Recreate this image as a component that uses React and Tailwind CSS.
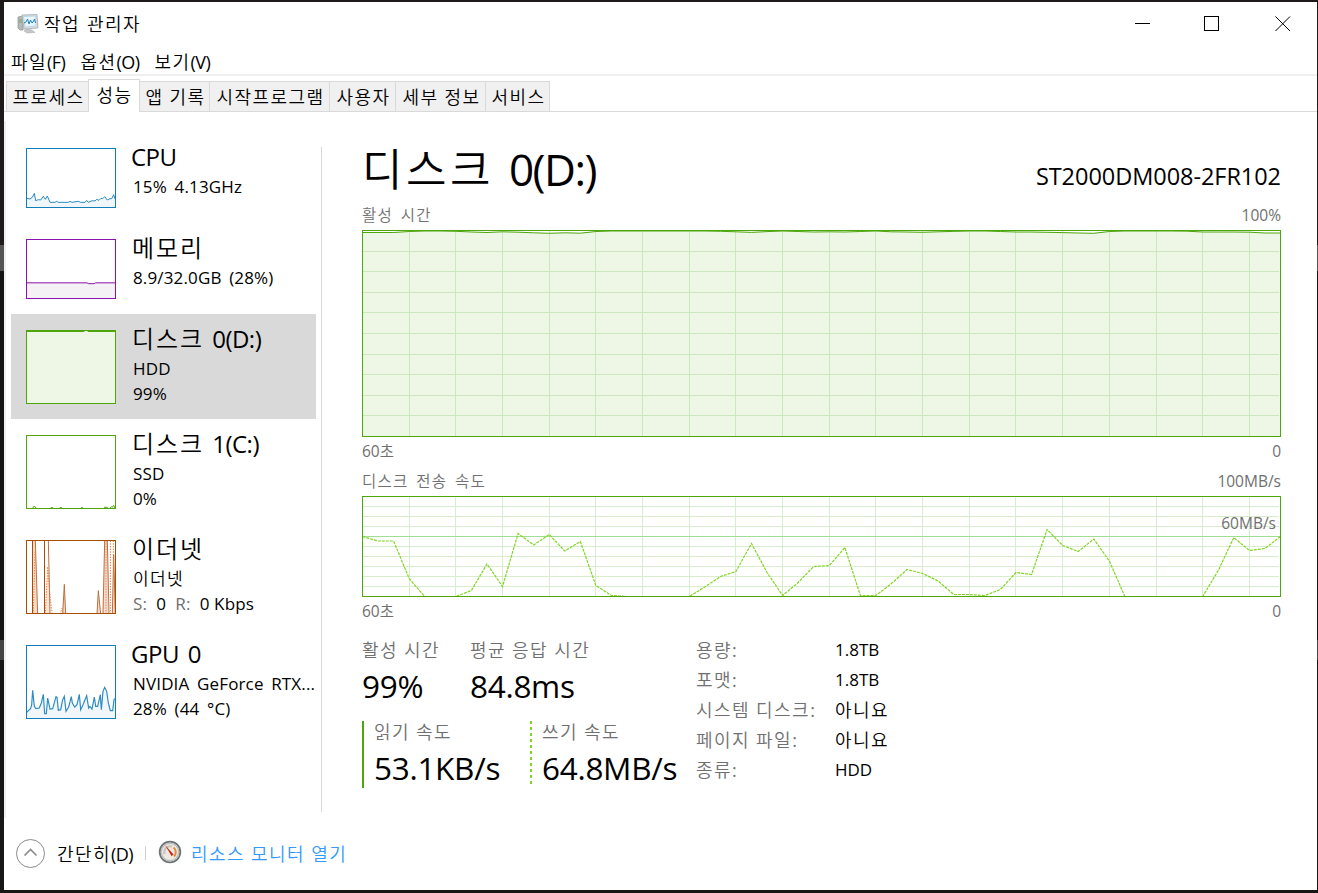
import React from 'react';

const TABS = [
    { label: '프로세스', width: 'w-[83px]' },
    { label: '성능', width: 'w-[52px]', active: true },
    { label: '앱 기록', width: 'w-[71px]' },
    { label: '시작프로그램', width: 'w-[121px]' },
    { label: '사용자', width: 'w-[67px]' },
    { label: '세부 정보', width: 'w-[91px]' },
    { label: '서비스', width: 'w-[65px]' },
];

const TRANSFER = [
    60, 55.5, 55.5, 18, 0, 0, 0, 6, 32.5, 10, 63, 51.5, 62, 45.5, 55, 11, 1, 0, 0, 0,
    0, 0, 9.5, 20, 25, 53, 24, 1, 14, 30, 31, 49, 1, 1, 13, 27, 23, 15.5, 2, 2,
    1, 7, 24, 22, 67, 51, 45, 57.5, 35.5, 0, 0, 0, 0, 0, 0, 26, 59, 46, 48, 60,
];

// distance from the 100% line, in pixels
const ACTIVE_DIPS = [
    1.5, 1.5, 1.5, 0.5, 0, 0, 0.3, 1, 1.5, 0.8, 1.2, 1.8, 2.3, 1.8, 2.2, 0.5, 0, 0, 0, 0,
    0, 0, 0, 0.3, 0.8, 1.4, 0.6, 0, 0.5, 1, 0.8, 1, 0.5, 0, 0.8, 1, 1.3, 0.8, 0.4, 0,
    0, 0.5, 1, 1, 1.3, 1.6, 2, 2.3, 0.5, 0, 0, 0, 0, 0.2, 1, 1, 1, 1.2, 2, 2,
];

const STEP = 918 / 59;

const DETAILS = [
    ['용량:', '1.8TB'],
    ['포맷:', '1.8TB'],
    ['시스템 디스크:', '아니요'],
    ['페이지 파일:', '아니요'],
    ['종류:', 'HDD'],
];

// Hangul runs are set a little wider and lighter than the Latin text beside them
const Txt = ({ children }) =>
    children.split(/([가-힣 ]+)/).map((part, i) => (
        <span key={i} className={/[가-힣]/.test(part) ? 'font-[360] tracking-[0.08em]' : 'font-normal'}>{part}</span>
    ));

const Grid = ({ height, rows, color }) => (
    <g stroke={color} strokeWidth="1" shapeRendering="crispEdges">
        {Array.from({ length: 19 }, (_, i) => {
            const x = 0.5 + STEP * 3 * (i + 1);
            return <line key={`v${i}`} x1={x} x2={x} y1="1" y2={height} />;
        })}
        {Array.from({ length: rows - 1 }, (_, i) => {
            const y = 0.5 + ((height - 1) / rows) * (i + 1);
            return <line key={`h${i}`} x1="1" x2="917" y1={y} y2={y} />;
        })}
    </g>
);

const ActiveChart = () => {
    const line = ACTIVE_DIPS.map((d, i) => `${0.5 + i * STEP},${1 + d}`).join(' ');
    return (
        <svg width="919" height="207" className="block">
            <polygon points={`0.5,206.5 ${line} 918.5,206.5`} fill="#eef6e6" />
            <Grid height={207} rows={10} color="#cae7bd" />
            <polyline points={line} fill="none" stroke="#4ca60c" />
            <rect x="0.5" y="0.5" width="918" height="206" fill="none" stroke="#4ca60c" />
        </svg>
    );
};

const TransferChart = () => (
    <svg width="919" height="101" className="block">
        <Grid height={101} rows={10} color="#d8edce" />
        <path d="M1 40.5H918" stroke="#a0dd96" />
        <polyline
            points={TRANSFER.map((v, i) => `${0.5 + i * STEP},${100.5 - v}`).join(' ')}
            fill="none"
            stroke="#80d522"
            strokeWidth="1.2"
            strokeDasharray="3 1"
        />
        <rect x="0.5" y="0.5" width="918" height="100" fill="none" stroke="#4ca60c" />
    </svg>
);

const Thumb = ({ height, color, fill = '#fff', children }) => (
    <svg width="90" height={height} viewBox={`0 0 270 ${height * 3}`} className="mt-[6px] block shrink-0">
        <rect width="270" height={height * 3} fill={fill} />
        {children}
        <rect x="1.5" y="1.5" width="267" height={height * 3 - 3} fill="none" stroke={color} strokeWidth="3" />
    </svg>
);

const CPU_LINE = '2,151 12,153 19,148 25,136 29,158 37,155 44,156 52,145 58,154 64,144 72,163 87,163 92,160 97,163 127,163 132,160 138,163 157,160 164,163 177,163 182,157 187,163 199,158 207,159 212,154 219,157 225,151 230,152 236,146 244,156 252,152 257,152 263,140 266,151 269,141';
const GPU_LINE = '2,202 14,190 17,179 20,136 25,184 30,191 40,189 46,174 52,148 56,206 61,206 65,159 72,192 80,191 90,155 93,157 97,196 104,194 110,164 115,154 120,199 128,186 136,155 139,174 146,186 153,179 160,148 164,194 171,179 182,152 188,189 192,184 198,192 205,156 209,184 215,184 223,149 226,194 231,139 236,127 242,139 247,174 253,197 260,197 264,164 269,159';

const CpuThumb = () => (
    <Thumb height={60} color="#117dbb">
        <polygon points={`2,180 ${CPU_LINE} 269,180`} fill="#f1f6fa" />
        <polyline points={CPU_LINE} fill="none" stroke="#2b8bc2" strokeWidth="3" />
    </Thumb>
);

const MemoryThumb = () => (
    <Thumb height={60} color="#8b12ae">
        <path d="M0 131.500H183L188 134H204L209 131.500H270V180H0Z" fill="#f4f2f4" />
        <path d="M0 131.500H183L188 134H204L209 131.500H270" fill="none" stroke="#8b12ae" strokeWidth="3" />
    </Thumb>
);

const DiskThumb = () => (
    <Thumb height={74} color="#4ca60c" fill="#eef6e6">
        <path d="M0 4.500H270" stroke="#4ca60c" strokeWidth="3" />
        <path d="M175 4.500H185" stroke="#fff" strokeWidth="3" />
    </Thumb>
);

const IdleDiskThumb = () => (
    <Thumb height={74} color="#4ca60c">
        <path d="M20 219L25 213L30 219M74 218H81M101 218H108M165 218H171M234 217H245M252 219L256 215L259 217L263 211L267 219" fill="none" stroke="#4ca60c" strokeWidth="3" />
    </Thumb>
);

const EthernetThumb = () => (
    <Thumb height={74} color="#a74f01">
        <path d="M20 222V2H28L35 222ZM110 222L115 133L119 222ZM213 222L217 152L224 222ZM231 222L236 2H244L249 222ZM259 222L263 45L268 222Z" fill="#f4ddd0" />
        <path d="M56 222L65 80L72 222Z" fill="#f7e6dc" />
        <path d="M19.500 222V2M55.500 222V2" stroke="#a74f01" strokeWidth="3" />
        <path d="M28 2L35 222M67 2L72 222M110 222L115 133L119 222M213 222L217 152L224 222M231 222L236 2M244 2L249 222M259 222L263 45L268 222" fill="none" stroke="#b9703d" strokeWidth="3" />
        <path d="M22 222L27 35M58 222L65 80L73 180L79 222M102 222L108 205L112 222M253.500 2V222M262 2V80M240 2V222" fill="none" stroke="#ea7c44" strokeWidth="3" strokeDasharray="4 4" />
    </Thumb>
);

const GpuThumb = () => (
    <Thumb height={74} color="#117dbb">
        <polygon points={`2,222 ${GPU_LINE} 269,222`} fill="#f1f6fa" />
        <polyline points={GPU_LINE} fill="none" stroke="#2b8bc2" strokeWidth="3.500" />
    </Thumb>
);

const Device = ({ title, lines, selected, short, children }) => (
    <div className={`flex w-[305px] gap-[16px] pt-[10px] pl-[15px] ${short ? 'h-[91px]' : 'h-[105px]'} ${selected ? 'bg-[#d9d9d9]' : ''}`}>
        {children}
        <div className="whitespace-nowrap">
            <div className={`h-[32px] text-[24px] leading-[30px] tracking-[-0.5px] ${/^[A-Z]/.test(title) ? '-ml-px [word-spacing:3px]' : ''}`}><Txt>{title}</Txt></div>
            {lines.map((line, i) => (
                <div key={i} className="pl-px text-[17px] leading-[25px] tracking-[0.15px] [word-spacing:3px]">{typeof line === 'string' ? <Txt>{line}</Txt> : line}</div>
            ))}
        </div>
    </div>
);

const AppIcon = () => (
    <svg width="22" height="20" viewBox="0 0 22 20">
        <path d="M1 3L6 2V16L3 16L1 14Z" fill="#b5bab7" stroke="#8e9490" strokeWidth="0.700" />
        <path d="M2 6H5M2 8H5" stroke="#77a66c" />
        <path d="M9 15L15 16L18 18.500L10 19L7 17Z" fill="#c5c8ca" stroke="#a5a8aa" strokeWidth="0.500" />
        <path d="M5 1L20 0.500L21 14L7 15Z" fill="#d9dddf" stroke="#a6abae" strokeWidth="0.800" />
        <path d="M6.500 2.500L18.500 2L19 12L8 13Z" fill="#e8f5fd" stroke="#a9cfe5" strokeWidth="0.700" />
        <path d="M7 9L9 8L10.500 5L12 10L13.500 6L15 9L16 8L17.500 5L18.500 9" fill="none" stroke="#2583b8" />
    </svg>
);

const GaugeIcon = () => (
    <svg width="24" height="24" viewBox="0 0 24 24">
        <circle cx="12" cy="12" r="10.300" fill="#eeece8" stroke="#6d7476" strokeWidth="1.800" />
        <circle cx="12" cy="12" r="8.700" fill="#ece8e2" stroke="#b9bdbd" strokeWidth="1.200" />
        <path d="M6.500 14A6 6 0 0 1 14 6.500" fill="none" stroke="#c9c3b9" strokeWidth="2" />
        <path d="M15.500 7.500A6 6 0 0 1 16 16.500" fill="none" stroke="#e58a35" strokeWidth="2" />
        <path d="M7 5L15.500 14.500L13.500 16Z" fill="#d11f17" />
    </svg>
);

const Stat = ({ label, value, className = '' }) => (
    <div className={`whitespace-nowrap ${className}`}>
        <div className="h-[22px] text-[18px] leading-[22px] text-[#707070]"><Txt>{label}</Txt></div>
        <div className="mt-[5px] text-[31.5px] leading-[40px] tracking-[-0.3px]">{value}</div>
    </div>
);

const Caption = ({ left, right, className }) => (
    <div className={`flex justify-between text-[15.5px] leading-[20px] text-[#707070] ${className}`}>
        <span className="[word-spacing:2.5px]"><Txt>{left}</Txt></span>
        <span>{right}</span>
    </div>
);

export default function App() {
    return (
        <div className="flex h-[893px] w-[1318px] flex-col bg-[linear-gradient(#1d1a19_0_245px,#565452_245px_271px,#161412_271px_640px,#444_640px_660px,#191716_660px)] pt-[2px] pr-px pb-[3px] pl-[4px] font-['Open_Sans','Noto_Sans_CJK_KR',sans-serif] font-normal text-black">
            <div className="flex min-h-0 flex-1 flex-col bg-white">
                <header className="flex h-[43px] items-center pr-[26px] pl-[13px]">
                    <AppIcon />
                    <span className="mt-[2px] ml-[5px] text-[18px] [word-spacing:1px]"><Txt>작업 관리자</Txt></span>
                    <svg width="156" height="16" viewBox="0 0 156 16" className="ml-auto" fill="none" stroke="#000">
                        <path d="M0 7.500H15M69.500 0.500H83.500V14.500H69.500Z" shapeRendering="crispEdges" />
                        <path d="M140.500 0.500L155 15M155 0.500L140.500 15" />
                    </svg>
                </header>

                <nav className="flex h-[31px] items-center gap-[15px] border-b-2 border-[#f0f0f0] pt-[5px] pl-[7px] text-[18px] tracking-[-0.5px]">
                    <span><Txt>파일(F)</Txt></span>
                    <span><Txt>옵션(O)</Txt></span>
                    <span><Txt>보기(V)</Txt></span>
                </nav>

                <div className="flex h-[36px] items-end border-b border-[#d9d9d9] pl-[2px] text-[18px]">
                    {TABS.map((tab) => (
                        <div
                            key={tab.label}
                            className={`-mr-px flex items-center justify-center whitespace-nowrap border border-b-0 border-[#d9d9d9] ${tab.width} ${tab.active ? 'z-10 -mb-px h-[33px] bg-white pb-[2px] pl-px' : 'h-[30px] bg-[#f0f0f0] pt-[2px] pl-[2px]'}`}
                        >
                            <span><Txt>{tab.label}</Txt></span>
                        </div>
                    ))}
                </div>

                <div className="flex min-h-0 flex-1">
                    <aside className="mt-[9px] h-[697px] w-[2px] bg-[#f0f0f0]" />
                    <aside className="ml-[5px] w-[310px] pt-[20px]">
                        <Device short title="CPU" lines={['15%  4.13GHz']}><CpuThumb /></Device>
                        <Device short title="메모리" lines={['8.9/32.0GB (28%)']}><MemoryThumb /></Device>
                        <Device selected title="디스크 0(D:)" lines={['HDD', '99%']}><DiskThumb /></Device>
                        <Device title="디스크 1(C:)" lines={['SSD', '0%']}><IdleDiskThumb /></Device>
                        <Device
                            title="이더넷"
                            lines={['이더넷', <span className="[word-spacing:0px]"><span className="text-[#707070]">S:</span>&nbsp; 0 &nbsp;<span className="text-[#707070]">R:</span>&nbsp; 0 Kbps</span>]}
                        >
                            <EthernetThumb />
                        </Device>
                        <Device title="GPU 0" lines={['NVIDIA GeForce RTX...', '28%  (44 °C)']}><GpuThumb /></Device>
                    </aside>
                    <div className="mt-[35px] h-[665px] w-px bg-[#d9d9d9]" />

                    <main className="ml-[40px] w-[919px] pt-[28px]">
                        <div className="flex h-[65px] items-start justify-between whitespace-nowrap">
                            <h1 className="-mt-px text-[44px] leading-[60px] tracking-[-1.5px]"><Txt>디스크 0(D:)</Txt></h1>
                            <span className="pt-[21px] text-[23.5px] leading-[30px] tracking-[-0.05px]">ST2000DM008-2FR102</span>
                        </div>
                        <Caption left="활성 시간" right="100%" className="h-[25px]" />
                        <ActiveChart />
                        <Caption left="60초" right="0" className="mt-[4px]" />
                        <Caption left="디스크 전송 속도" right="100MB/s" className="mt-[10px] mb-[5px]" />
                        <div className="relative">
                            <TransferChart />
                            <span className="absolute top-[17px] right-[5px] text-[15.5px] leading-[20px] text-[#707070]">60MB/s</span>
                        </div>
                        <Caption left="60초" right="0" className="mt-[4px]" />

                        <div className="mt-[18px] flex">
                            <div className="w-[334px]">
                                <div className="flex">
                                    <Stat label="활성 시간" value="99%" className="w-[108px]" />
                                    <Stat label="평균 응답 시간" value="84.8ms" />
                                </div>
                                <div className="mt-[15px] flex">
                                    <Stat label="읽기 속도" value="53.1KB/s" className="h-[67px] w-[167px] border-l-2 border-[#4ca60c] pl-[10px]" />
                                    <div className="ml-px h-[63px] w-[2px] bg-[repeating-linear-gradient(#80d522_0_3px,transparent_3px_6px)]" />
                                    <Stat label="쓰기 속도" value="64.8MB/s" className="pl-[10px]" />
                                </div>
                            </div>
                            <dl className="whitespace-nowrap leading-[30px]">
                                {DETAILS.map(([name, value]) => (
                                    <div key={name} className="-mt-[4px] mb-[4px] flex h-[30px]">
                                        <dt className="w-[139px] text-[18px] text-[#707070]"><Txt>{name}</Txt></dt>
                                        <dd className={/[가-힣]/.test(value) ? 'text-[18px]' : 'text-[17px]'}><Txt>{value}</Txt></dd>
                                    </div>
                                ))}
                            </dl>
                        </div>
                    </main>
                </div>

                <footer className="flex h-[74px] shrink-0 items-center pl-[11px] text-[18px]">
                    <svg width="31" height="31" viewBox="0 0 31 31" fill="none" stroke="#8a8a8a">
                        <circle cx="15.500" cy="15.500" r="14" />
                        <path d="M9.500 17.500L15.500 11.500L21.500 17.500" strokeWidth="1.600" />
                    </svg>
                    <span className="mt-[2px] ml-[11px] w-[88px] tracking-[-0.6px]"><Txt>간단히(D)</Txt></span>
                    <span className="h-[14px] w-px bg-[#d0d0d0]" />
                    <span className="-mt-[2px] ml-[12px]"><GaugeIcon /></span>
                    <span className="mt-[2px] ml-[9px] text-[#3399ff]"><Txt>리소스 모니터 열기</Txt></span>
                </footer>
            </div>
        </div>
    );
}
